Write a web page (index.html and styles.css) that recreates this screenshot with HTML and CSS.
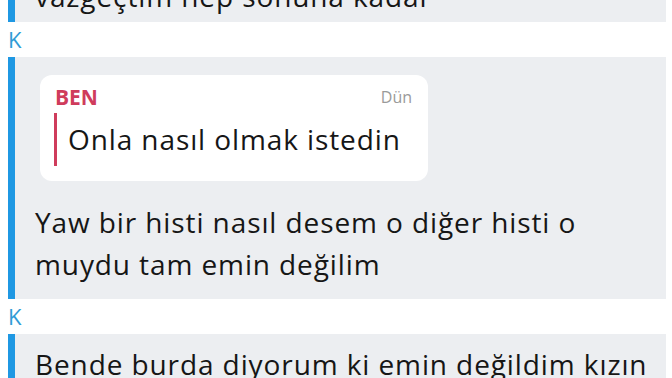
FILE: index.html
```html
<!DOCTYPE html>
<html lang="tr">
<head>
    <meta charset="UTF-8">
    <meta name="viewport" content="width=device-width, initial-scale=1.0">
    <title>Sohbet</title>
    <link rel="stylesheet" href="styles.css">
</head>
<body>

    <div class="chat">
        <div class="msg msg-cut">
            <p class="text">vazgeçtim hep sonuna kadar</p>
        </div>

        <div class="sender">K</div>

        <div class="msg">
            <div class="reply">
                <div class="reply-head">
                    <span class="reply-name">BEN</span>
                    <span class="reply-time">Dün</span>
                </div>
                <div class="reply-quote">Onla nasıl olmak istedin</div>
            </div>
            <p class="text">Yaw bir histi nasıl desem o diğer histi o muydu tam emin değilim</p>
        </div>

        <div class="sender">K</div>

        <div class="msg">
            <p class="text">Bende burda diyorum ki emin değildim kızın</p>
        </div>
    </div>

</body>
</html>
```

FILE: styles.css
```css
body { margin: 0; padding: 0; background: #fff; font-family: "Open Sans", Lato, sans-serif; color: #161616; overflow: hidden; font-variant-ligatures: none; }
.chat { margin-top: -20px; padding: 0 6px 0 8px; }
.sender { height: 35px; line-height: 35px; font-size: 22px; color: #2f9bd6; }
.msg { background: #eceef1; border-left: 7px solid #1f98e3; padding: 9px 0 14px 20px; }
.msg-cut { padding-top: 0; padding-bottom: 0; height: 42px; }
.msg-cut .text { line-height: 32px; }
.text { margin: 0; font-size: 28px; line-height: 42px; letter-spacing: 0.9px; }
.reply { background: #fff; border-radius: 12px; width: 388px; box-sizing: border-box; padding: 10px 16px 15px 14px; margin: 9px 0 20px 5px; }
.reply-head { display: flex; justify-content: space-between; align-items: center; line-height: 24px; }
.reply-name { font-size: 21px; font-weight: 700; color: #cf3c5c; padding-left: 1px; }
.reply-time { font-size: 16px; color: #9a9a9a; }
.reply-quote { margin-top: 4px; border-left: 3px solid #cf3c5c; padding-left: 11px; font-size: 28px; line-height: 53px; letter-spacing: 0.9px; }
```
